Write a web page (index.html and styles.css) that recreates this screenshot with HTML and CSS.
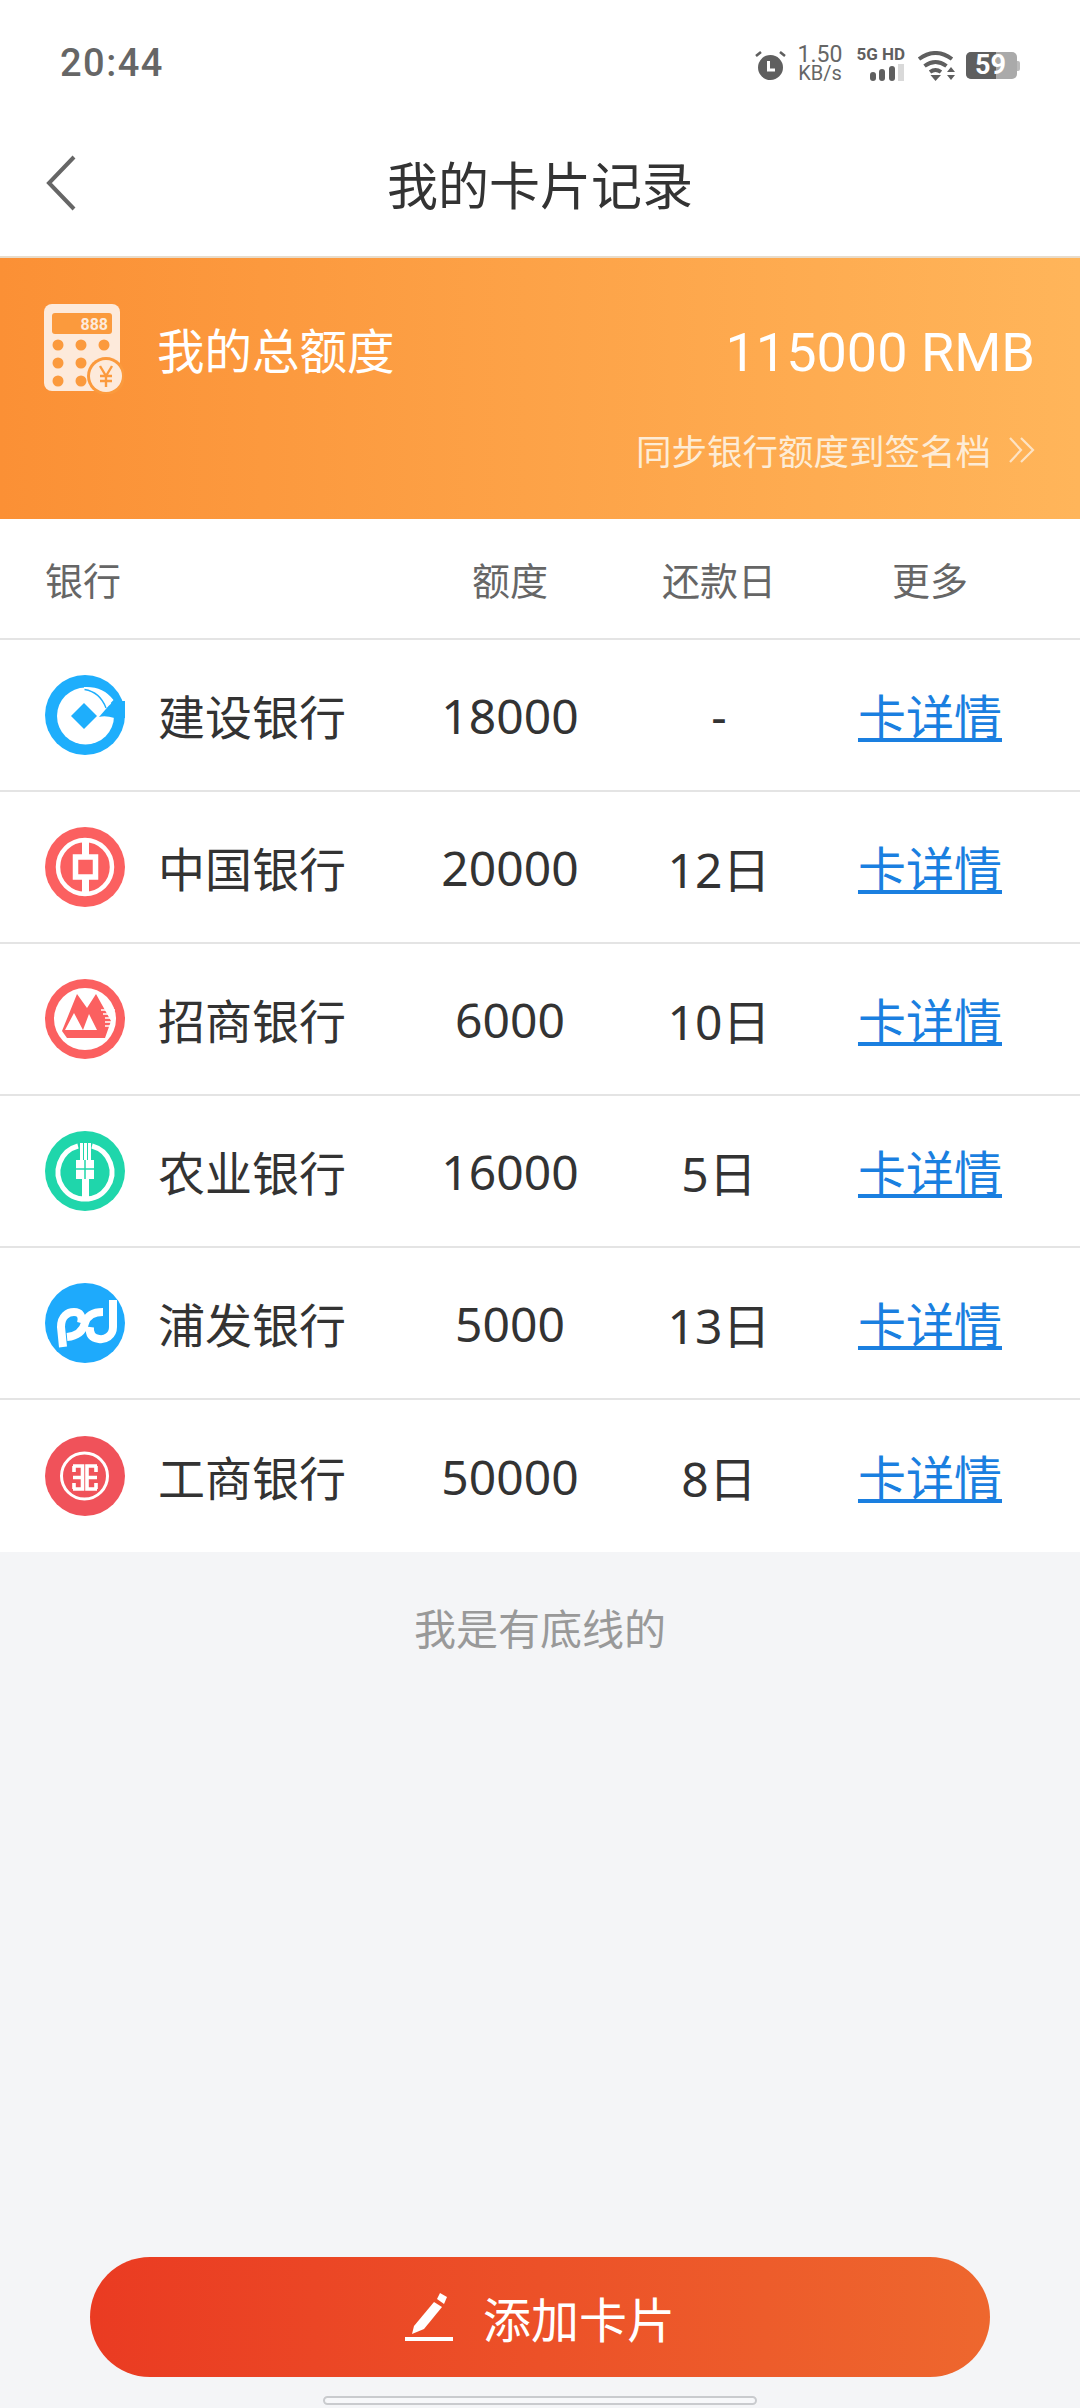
FILE: index.html
```html
<!DOCTYPE html>
<html lang="zh-CN">
<head>
    <meta charset="UTF-8">
    <meta name="viewport" content="width=device-width, initial-scale=1.0">
    <title>我的卡片记录</title>
    <link rel="stylesheet" href="styles.css">
</head>
<body>

<div class="page">
    <!-- Status bar -->
    <div class="status-bar">
        <span class="time">20:44</span>
        <div class="status-icons">
            <svg class="alarm" width="31" height="31" viewBox="0 0 31 31">
                <circle cx="15.5" cy="17.5" r="12.5" fill="#5f5f5f"/>
                <path d="M1 6 L6 2 M30 6 L25 2" stroke="#5f5f5f" stroke-width="2.6" fill="none"/>
                <path d="M13.5 11 V20 H20" stroke="#fff" stroke-width="3" fill="none"/>
            </svg>
            <div class="speed"><span class="speed-num">1.50</span><span class="speed-unit">KB/s</span></div>
            <div class="signal">
                <span>5G HD</span>
                <svg width="36" height="17" viewBox="0 0 36 17">
                    <rect x="1" y="8" width="6" height="9" rx="3" fill="#5f5f5f"/>
                    <rect x="10" y="5" width="6" height="12" rx="3" fill="#5f5f5f"/>
                    <rect x="20" y="2" width="6" height="15" rx="3" fill="#5f5f5f"/>
                    <rect x="29" y="0" width="6" height="17" fill="#d9d9d9"/>
                </svg>
            </div>
            <svg class="wifi" width="38" height="30" viewBox="0 0 38 30">
                <path d="M2 8 Q18.5 -4 35 8 M7.5 15 Q18.5 7 29.5 15 M13 21 Q18.5 17 24 21" stroke="#5f5f5f" stroke-width="4" fill="none"/>
                <path d="M13.5 24 H24 L18.5 30 Z" fill="#5f5f5f"/>
                <path d="M34 16 L38 21 H30 Z M30 24 H38 L34 29 Z" fill="#5f5f5f"/>
            </svg>
            <div class="battery">
                <div class="battery-body">
                    <span class="battery-fill"></span>
                    <span class="battery-num">59</span>
                </div>
                <span class="battery-nub"></span>
            </div>
        </div>
    </div>

    <!-- Title -->
    <div class="nav">
        <svg class="back" width="34" height="58" viewBox="0 0 34 58">
            <path d="M30 3 L5 29 L30 55" stroke="#666" stroke-width="4" fill="none"/>
        </svg>
        <span class="nav-title">我的卡片记录</span>
    </div>

    <!-- Total -->
    <div class="banner">
        <div class="banner-top">
            <svg class="calc" width="80" height="90" viewBox="0 0 80 90">
                <rect x="0" y="0" width="76" height="87" rx="8" fill="#fdeadb"/>
                <rect x="8" y="9" width="60" height="21" rx="3" fill="#fb9a3d"/>
                <text x="64" y="26" class="calc-num" text-anchor="end">888</text>
                <circle cx="14" cy="41" r="5.5" fill="#fb9a3d"/>
                <circle cx="37" cy="41" r="5.5" fill="#fb9a3d"/>
                <circle cx="60" cy="41" r="5.5" fill="#fb9a3d"/>
                <circle cx="14" cy="59" r="5.5" fill="#fb9a3d"/>
                <circle cx="37" cy="59" r="5.5" fill="#fb9a3d"/>
                <circle cx="14" cy="77" r="5.5" fill="#fb9a3d"/>
                <circle cx="37" cy="77" r="5.5" fill="#fb9a3d"/>
                <circle cx="62" cy="72" r="19" fill="#fb9a3d"/>
                <circle cx="62" cy="72" r="16" fill="#fdeadb"/>
                <path d="M56 62 L62 72 L68 62 M62 72 V83 M56 72 H68 M56 77 H68" stroke="#fb9a3d" stroke-width="2.4" fill="none"/>
            </svg>
            <span class="banner-title">我的总额度</span>
            <span class="banner-amount">115000 RMB</span>
        </div>
        <div class="banner-sync">
            <span>同步银行额度到签名档</span>
            <svg width="28" height="28" viewBox="0 0 28 28">
                <path d="M2 2 L13 14 L2 26 M13 2 L25 14 L13 26" stroke="#fde3c4" stroke-width="2.2" fill="none"/>
            </svg>
        </div>
    </div>

    <!-- Card table -->
    <div class="table">
        <div class="row row-head">
            <span class="cell-name">银行</span>
            <span>额度</span>
            <span>还款日</span>
            <span>更多</span>
        </div>

        <div class="row">
            <div class="cell-name">
                <svg class="bank-icon" viewBox="0 0 80 80">
                    <circle cx="40" cy="40" r="40" fill="#1eaefc"/>
                    <circle cx="40.5" cy="41" r="28.5" fill="#fff"/>
                    <path d="M39 12 Q58 11 68.5 25 L62 32 Q55 18 39 15 Z" fill="#fff"/>
                    <path d="M39.5 14.5 Q55 17 61 33" stroke="#1eaefc" stroke-width="1.4" fill="none"/>
                    <path d="M39 28 L52 41 L39 54 L26 41 Z" fill="#1eaefc"/>
                    <path d="M54 42 L63.5 31 L69 26 L80 26 L80 43 L69.5 43 Q60 40 54 42 Z" fill="#1eaefc"/>
                </svg>
                <span>建设银行</span>
            </div>
            <span>18000</span>
            <span>-</span>
            <a class="link">卡详情</a>
        </div>

        <div class="row">
            <div class="cell-name">
                <svg class="bank-icon" viewBox="0 0 80 80">
                    <circle cx="40" cy="40" r="40" fill="#fb6060"/>
                    <circle cx="40" cy="40" r="27" fill="none" stroke="#fff" stroke-width="4.5"/>
                    <rect x="37" y="13" width="7" height="54" fill="#fff"/>
                    <rect x="30.5" y="30" width="20" height="20" fill="#fb6060" stroke="#fff" stroke-width="5.5"/>
                </svg>
                <span>中国银行</span>
            </div>
            <span>20000</span>
            <span>12日</span>
            <a class="link">卡详情</a>
        </div>

        <div class="row">
            <div class="cell-name">
                <svg class="bank-icon" viewBox="0 0 80 80">
                    <circle cx="40" cy="40" r="40" fill="#fb6060"/>
                    <circle cx="40" cy="40" r="31" fill="#fff"/>
                    <path d="M32 15 L42 29 L51 15 L66 42 L60 59 H22 L17 52 Z" fill="#fb6060"/>
                    <path d="M29 34 L20 51 H38 Z M44 35 L38 51 H52 Z" fill="#fff"/>
                    <path d="M56 31 H70 M58 35 H70 M60 39 H70 M60 43 H70 M60 47 H70" stroke="#fff" stroke-width="1.5" fill="none"/>
                </svg>
                <span>招商银行</span>
            </div>
            <span>6000</span>
            <span>10日</span>
            <a class="link">卡详情</a>
        </div>

        <div class="row">
            <div class="cell-name">
                <svg class="bank-icon" viewBox="0 0 80 80">
                    <circle cx="40" cy="40" r="40" fill="#1fd6ab"/>
                    <path d="M33 15 A27 27 0 1 0 47 15" stroke="#fff" stroke-width="5" fill="none"/>
                    <rect x="35" y="12" width="3" height="17" fill="#fff"/>
                    <rect x="39" y="12" width="3" height="17" fill="#fff"/>
                    <rect x="43" y="12" width="3" height="17" fill="#fff"/>
                    <path d="M31 29 H49 V48 H44 V66 H37 V48 H31 Z" fill="#fff"/>
                    <path d="M31 38 H49 M40 29 V48" stroke="#1fd6ab" stroke-width="1.5" fill="none"/>
                </svg>
                <span>农业银行</span>
            </div>
            <span>16000</span>
            <span>5日</span>
            <a class="link">卡详情</a>
        </div>

        <div class="row">
            <div class="cell-name">
                <svg class="bank-icon" viewBox="0 0 80 80">
                    <circle cx="40" cy="40" r="40" fill="#1eaafc"/>
                    <g stroke="#fff" stroke-width="8" fill="none">
                        <path d="M18 64 L16 44 C16 33 23 29 29 29 C35 29 38 33 36 40"/>
                        <path d="M58 29 C47 29 42 33 40 40 C38 48 33 53 22 54"/>
                        <path d="M68 17 L68 44 C68 53 60 57 54 56 C47 55 44 51 45 44"/>
                    </g>
                </svg>
                <span>浦发银行</span>
            </div>
            <span>5000</span>
            <span>13日</span>
            <a class="link">卡详情</a>
        </div>

        <div class="row">
            <div class="cell-name">
                <svg class="bank-icon" viewBox="0 0 80 80">
                    <circle cx="40" cy="40" r="40" fill="#f0525a"/>
                    <circle cx="39.5" cy="40" r="23" fill="none" stroke="#fff" stroke-width="3"/>
                    <g stroke="#fff" stroke-width="3.6" fill="none">
                        <path d="M28 30 H37.5 V53 H28 M28 41.5 H37.5 M29 30 V36 M29 47 V53"/>
                        <path d="M52 30 H42 V53 H52 M52 41.5 H42 M51 30 V36 M51 47 V53"/>
                    </g>
                </svg>
                <span>工商银行</span>
            </div>
            <span>50000</span>
            <span>8日</span>
            <a class="link">卡详情</a>
        </div>
    </div>

    <p class="bottom-line">我是有底线的</p>

    <button class="add-btn" type="button">
        <svg width="48" height="48" viewBox="0 0 48 48">
            <path d="M29 9 L37 14 L19 36 L7 41 L9 33 Z" fill="#fff"/>
            <path d="M35 0 L42 4 L39 11 L32 6 Z" fill="#fff"/>
            <rect x="0" y="44" width="48" height="4" fill="#fff"/>
        </svg>
        <span>添加卡片</span>
    </button>
    <div class="home-bar"></div>
</div>

</body>
</html>
```

FILE: styles.css
```css
* {
    box-sizing: border-box;
}

body {
    margin: 0;
    font-family: "Noto Sans CJK SC", "Noto Sans", sans-serif;
    background: #f4f5f7;
}

.page {
    width: 1080px;
    height: 2408px;
    display: flex;
    flex-direction: column;
    overflow: hidden;
}

/* Status bar */
.status-bar {
    height: 126px;
    background: #fff;
    padding: 44px 60px 0 60px;
    display: flex;
    justify-content: space-between;
    align-items: flex-start;
}

.time {
    font-family: "Roboto", sans-serif;
    font-size: 38px;
    font-weight: 500;
    color: #666;
    line-height: 38px;
    letter-spacing: 1.5px;
}

.status-icons {
    display: flex;
    align-items: flex-start;
    margin-top: 3px;
}

.alarm {
    margin-top: 3px;
    margin-right: 11px;
}

.speed {
    display: flex;
    flex-direction: column;
    align-items: center;
    width: 46px;
    margin-top: -2px;
    margin-right: 14px;
    font-family: "Roboto", sans-serif;
    color: #666;
}

.speed-num {
    font-size: 23px;
    line-height: 20px;
}

.speed-unit {
    font-size: 20px;
    line-height: 17px;
}

.signal {
    display: flex;
    flex-direction: column;
    align-items: flex-end;
    width: 48px;
    margin-right: 12px;
    font-family: "Roboto", sans-serif;
    font-size: 17px;
    font-weight: 700;
    line-height: 15px;
    color: #5f5f5f;
    white-space: nowrap;
}

.signal svg {
    margin-top: 2px;
}

.wifi {
    margin-top: 4px;
    margin-right: 11px;
}

.battery {
    display: flex;
    align-items: center;
    margin-top: 5px;
}

.battery-body {
    position: relative;
    width: 51px;
    height: 27px;
    border-radius: 5px;
    background: #aaa;
}

.battery-fill {
    display: block;
    width: 30px;
    height: 27px;
    background: #5f5f5f;
    border-radius: 5px 0 0 5px;
}

.battery-num {
    position: absolute;
    left: 9px;
    top: 0;
    font-family: "Roboto", sans-serif;
    font-size: 27px;
    font-weight: 700;
    line-height: 27px;
    color: #fff;
}

.battery-nub {
    width: 3px;
    height: 10px;
    background: #bbb;
    border-radius: 0 2px 2px 0;
}

/* Title */
.nav {
    position: relative;
    height: 132px;
    background: #fff;
    border-bottom: 2px solid #e8dccb;
    display: flex;
    align-items: center;
    justify-content: center;
    padding-bottom: 16px;
}

.back {
    position: absolute;
    left: 44px;
    top: 28px;
}

.nav-title {
    font-size: 51px;
    color: #333;
}

/* Total */
.banner {
    height: 261px;
    background: linear-gradient(90deg, #fb9035, #ffb55a);
    padding: 45px 44px 0 44px;
    color: #fff;
}

.banner-top {
    display: flex;
    align-items: center;
    height: 92px;
}

.banner-title {
    margin-left: 33px;
    margin-top: -2px;
    font-size: 47.5px;
}

.banner-amount {
    margin-left: auto;
    margin-top: 6px;
    margin-right: 1px;
    font-family: "Roboto", sans-serif;
    font-size: 54px;
}

.banner-sync {
    display: flex;
    justify-content: flex-end;
    align-items: center;
    gap: 17px;
    margin-top: 30px;
    font-size: 35.5px;
    line-height: 50px;
    color: #fdecd6;
}

.calc-num {
    font-family: "Roboto", sans-serif;
    font-size: 16px;
    font-weight: 700;
    fill: #fdeadb;
}

/* Card table */
.table {
    background: #fff;
}

.row {
    display: grid;
    grid-template-columns: 361px 208px 210px 212px;
    align-items: center;
    justify-items: center;
    height: 152px;
    padding: 0 44px 0 45px;
    border-bottom: 2px solid #e4e4e4;
    font-family: "Noto Sans", "Noto Sans CJK SC", sans-serif;
    font-size: 48px;
    color: #333;
}

.row:last-child {
    border-bottom: none;
}

.row-head {
    height: 121px;
    font-family: "Noto Sans CJK SC", sans-serif;
    font-size: 38px;
    color: #666;
}

.cell-name {
    justify-self: start;
    display: flex;
    align-items: center;
    gap: 33px;
    font-family: "Noto Sans CJK SC", sans-serif;
    font-size: 47px;
}

.cell-name span {
    margin-top: -2px;
}

.row-head .cell-name {
    font-size: 38px;
}

.bank-icon {
    width: 80px;
    height: 80px;
    flex: none;
}

.link {
    margin-top: -2px;
    font-family: "Noto Sans CJK SC", sans-serif;
    font-size: 48px;
    color: #1a7fe0;
    text-decoration: underline;
}

.bottom-line {
    margin: 47px 0 0 0;
    text-align: center;
    font-size: 42px;
    line-height: 56px;
    color: #999;
}

/* Add button */
.add-btn {
    margin: auto 90px 0 90px;
    height: 120px;
    border: none;
    border-radius: 60px;
    background: linear-gradient(90deg, #ea3b22, #ee672e);
    display: flex;
    align-items: center;
    justify-content: center;
    gap: 30px;
    font-family: "Noto Sans CJK SC", sans-serif;
    font-size: 48px;
    color: #fff;
}

.home-bar {
    flex: none;
    width: 434px;
    height: 9px;
    margin: 19px auto 3px auto;
    background: #f7f8fa;
    border: 2px solid #c9cbce;
    border-radius: 5px;
}
```
